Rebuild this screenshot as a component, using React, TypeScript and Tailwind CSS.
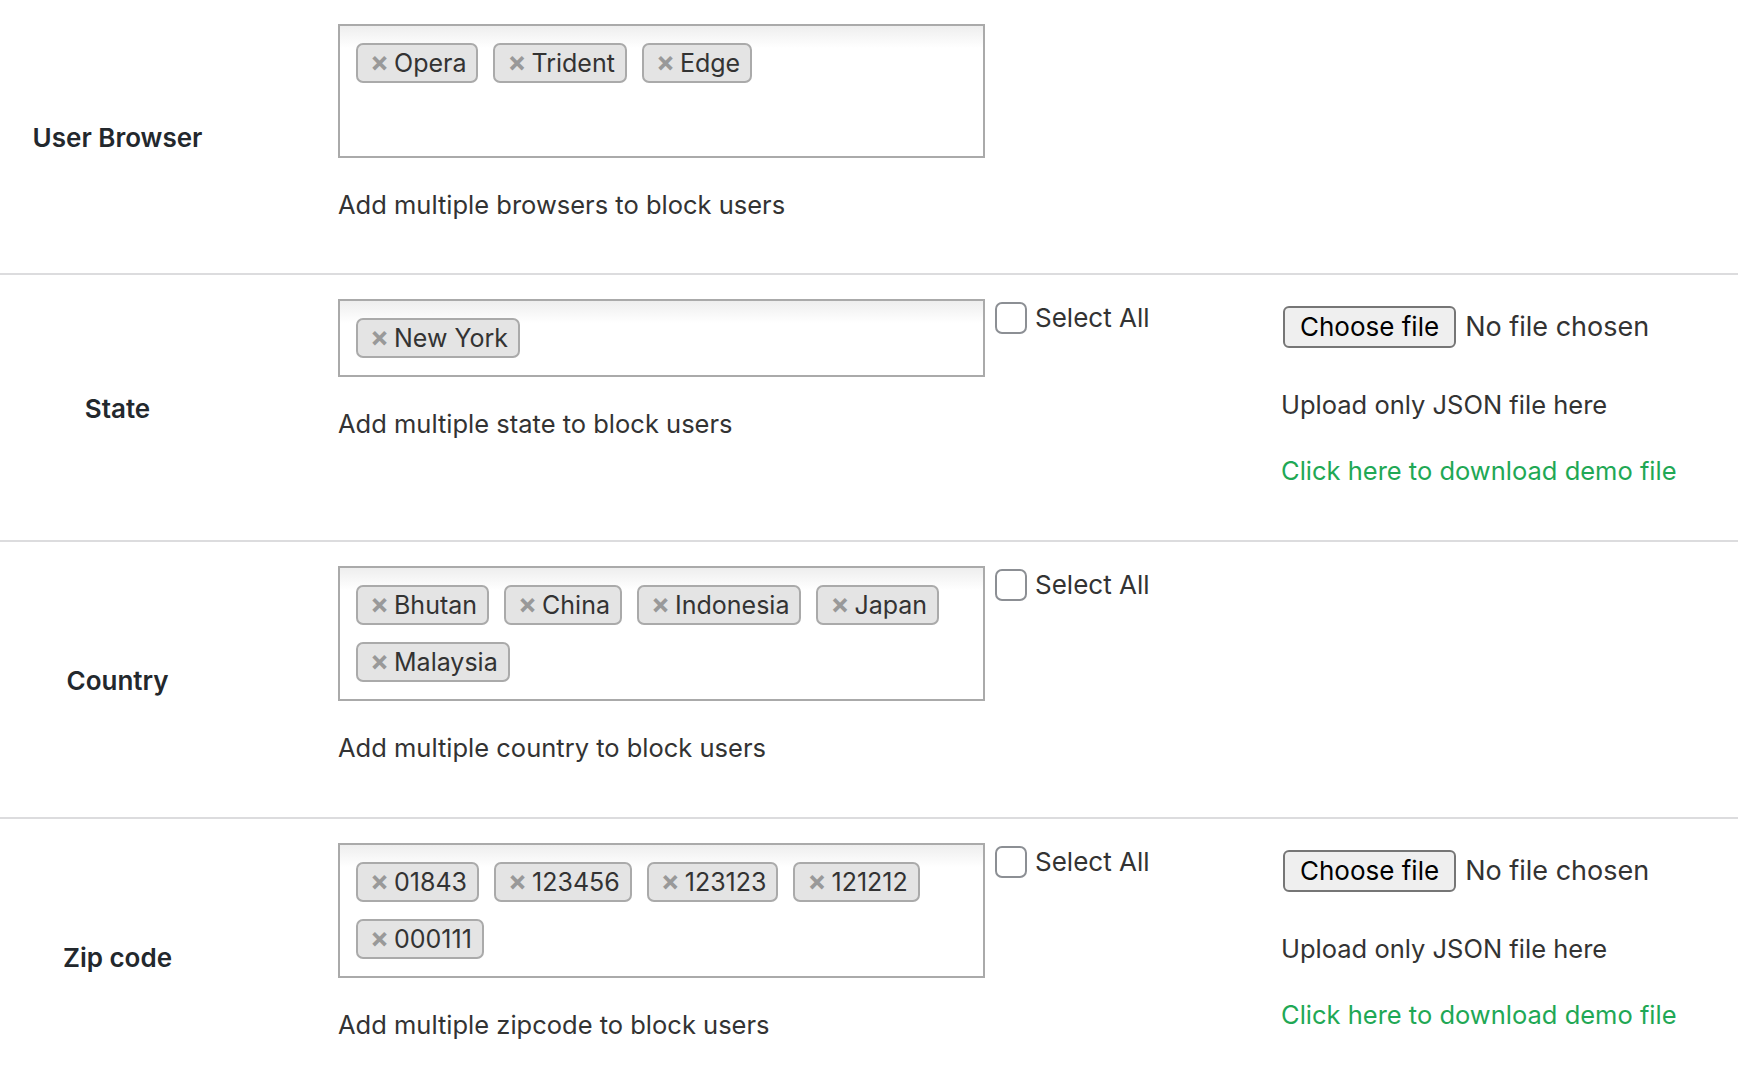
import React from 'react';

type Row = {
  label: string;
  tags: string[];
  desc: string;
  selectAll: boolean;
  upload: boolean;
  tall: boolean;
};

const rows: Row[] = [
  { label: 'User Browser', tags: ['Opera', 'Trident', 'Edge'], desc: 'Add multiple browsers to block users', selectAll: false, upload: false, tall: true },
  { label: 'State', tags: ['New York'], desc: 'Add multiple state to block users', selectAll: true, upload: true, tall: false },
  { label: 'Country', tags: ['Bhutan', 'China', 'Indonesia', 'Japan', 'Malaysia'], desc: 'Add multiple country to block users', selectAll: true, upload: false, tall: true },
  { label: 'Zip code', tags: ['01843', '123456', '123123', '121212', '000111'], desc: 'Add multiple zipcode to block users', selectAll: true, upload: true, tall: true },
];

function Tag({ text }: { text: string }) {
  return (
    <li className="flex items-center h-[40px] pl-[12px] pr-[10px] bg-[#e4e4e4] border-2 border-[#aaaaaa] rounded-[7px] text-[25px] text-[#333333]">
      <span className="text-[#999999] font-bold text-[28px] leading-none mr-[5px] -mt-[2px]">×</span>
      <span className="leading-none">{text}</span>
    </li>
  );
}

function TagBox({ tags, tall }: { tags: string[]; tall: boolean }) {
  return (
    <div
      className={`w-[647px] border-2 border-[#aaaaaa] bg-[linear-gradient(to_bottom,#eeeeee_0px,#ffffff_22px)] pl-[16px] pr-[16px] pt-[17px] pb-[17px] ${
        tall ? 'min-h-[134px]' : ''
      }`}
    >
      <ul className="flex flex-wrap gap-x-[15px] gap-y-[17px]">
        {tags.map((t) => (
          <Tag key={t} text={t} />
        ))}
      </ul>
    </div>
  );
}

function SelectAll() {
  return (
    <label className="ml-[10px] mt-[3px] w-[286px] flex items-center gap-[8px] h-[32px] self-start">
      <input
        type="checkbox"
        className="appearance-none w-[32px] h-[32px] border-2 border-[#8c8f94] rounded-[7px] bg-white shrink-0"
      />
      <span className="leading-[32px] text-[26px] text-[#333333]">Select All</span>
    </label>
  );
}

function Upload() {
  return (
    <div className="flex flex-col">
      <div className="flex items-center mt-[7px]">
        <button className="ml-[2px] h-[42px] px-[15px] bg-[#efefef] border-2 border-[#767676] rounded-[6px] text-black text-[26px] leading-none">
          Choose file
        </button>
        <span className="ml-[9px] text-[27px] text-[#333333]">No file chosen</span>
      </div>
      <p className="mt-[41px] leading-[32px] text-[#333333]">Upload only JSON file here</p>
      <a href="#" className="mt-[34px] leading-[32px] text-[#1fa855]">
        Click here to download demo file
      </a>
    </div>
  );
}

export default function App() {
  return (
    <div className="min-h-screen bg-white font-['Inter',sans-serif] text-[25.5px] text-[#333333]">
      {rows.map((row, i) => (
        <div
          key={row.label}
          className={`flex items-stretch pt-[24px] ${i > 0 ? 'pb-[53px] border-t-2 border-[#dcdcde]' : 'pb-[52px]'}`}
        >
          <div className="w-[235px] shrink-0 self-center mt-[30px] text-center text-[26px] font-semibold text-[#23282d]">
            {row.label}
          </div>
          <div className="ml-[103px] flex items-start">
            <div className="flex flex-col">
              <TagBox tags={row.tags} tall={row.tall} />
              <p className="mt-[31px] leading-[32px]">{row.desc}</p>
            </div>
            {row.selectAll && <SelectAll />}
            {row.upload && <Upload />}
          </div>
        </div>
      ))}
    </div>
  );
}
